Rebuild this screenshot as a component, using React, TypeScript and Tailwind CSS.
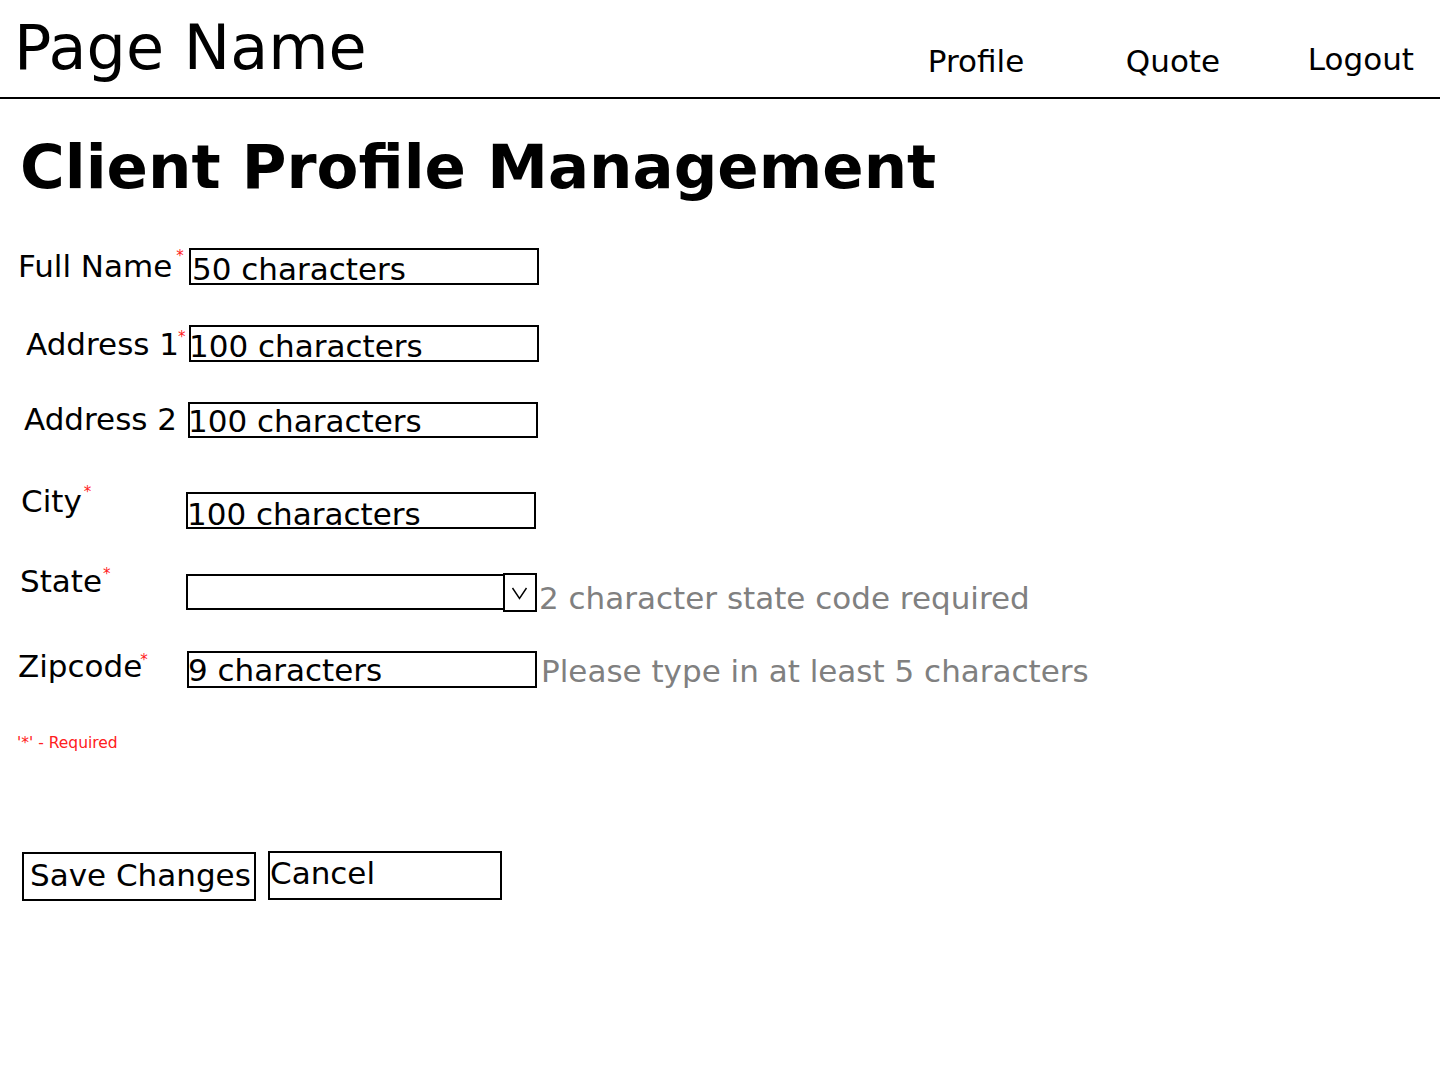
import React from "react";

type FieldRow = {
  label: string;
  required?: boolean;
  value?: string;
  kind?: "text" | "select";
  hint?: string;
  rowH: string;
  padL: string;
  labelW: string;
  labelMt: string;
  starCls: string;
  boxMt: string;
  boxW: string;
  boxH: string;
  textCls: string;
  hintCls?: string;
};

const rows: FieldRow[] = [
  {
    label: "Full Name",
    required: true,
    value: "50 characters",
    rowH: "h-[77px]",
    padL: "pl-[18px]",
    labelW: "w-[171px]",
    labelMt: "mt-0",
    starCls: "mt-[1px] ml-[4px]",
    boxMt: "mt-0",
    boxW: "w-[350px]",
    boxH: "h-[37px]",
    textCls: "pl-[1px] mt-[1px]",
  },
  {
    label: "Address 1",
    required: true,
    value: "100 characters",
    rowH: "h-[76px]",
    padL: "pl-[26px]",
    labelW: "w-[163px]",
    labelMt: "mt-[1px]",
    starCls: "mt-[4px] -ml-[1px]",
    boxMt: "mt-0",
    boxW: "w-[350px]",
    boxH: "h-[37px]",
    textCls: "-ml-[2px] mt-[1px]",
  },
  {
    label: "Address 2",
    value: "100 characters",
    rowH: "h-[82px]",
    padL: "pl-[24px]",
    labelW: "w-[164px]",
    labelMt: "mt-0",
    starCls: "",
    boxMt: "mt-[1px]",
    boxW: "w-[350px]",
    boxH: "h-[36px]",
    textCls: "-ml-[2px] -mt-[1px]",
  },
  {
    label: "City",
    required: true,
    value: "100 characters",
    rowH: "h-[80px]",
    padL: "pl-[21px]",
    labelW: "w-[165px]",
    labelMt: "mt-0",
    starCls: "mt-[2px] ml-[2px]",
    boxMt: "mt-[9px]",
    boxW: "w-[350px]",
    boxH: "h-[37px]",
    textCls: "-ml-[1px] mt-[2px]",
  },
  {
    label: "State",
    required: true,
    kind: "select",
    hint: "2 character state code required",
    rowH: "h-[85px]",
    padL: "pl-[20px]",
    labelW: "w-[166px]",
    labelMt: "mt-0",
    starCls: "mt-[4px] ml-[1px]",
    boxMt: "mt-[11px]",
    boxW: "w-[351px]",
    boxH: "h-[36px]",
    textCls: "",
    hintCls: "ml-[2px] mt-[17px]",
  },
  {
    label: "Zipcode",
    required: true,
    value: "9 characters",
    hint: "Please type in at least 5 characters",
    rowH: "h-[86px]",
    padL: "pl-[18px]",
    labelW: "w-[169px]",
    labelMt: "mt-0",
    starCls: "mt-[5px] -ml-[2px]",
    boxMt: "mt-[3px]",
    boxW: "w-[350px]",
    boxH: "h-[37px]",
    textCls: "-ml-[1px] -mt-[1px]",
    hintCls: "ml-[4px] mt-[5px]",
  },
];

function Chevron() {
  return (
    <svg width="17" height="14" viewBox="0 0 17 14" fill="none">
      <polyline points="1.5,2 8.5,12.5 15.5,2" stroke="#000" strokeWidth="1.4" />
    </svg>
  );
}

function Row({ r }: { r: FieldRow }) {
  return (
    <div className={`flex items-start ${r.rowH} ${r.padL}`}>
      <div className={`flex items-start shrink-0 ${r.labelW} ${r.labelMt}`}>
        <span className="leading-[36px]">{r.label}</span>
        {r.required && (
          <span className={`text-[15px] leading-[15px] text-[#ff2020] ${r.starCls}`}>*</span>
        )}
      </div>
      {r.kind === "select" ? (
        <div className={`relative shrink-0 border-2 border-black ${r.boxW} ${r.boxH} ${r.boxMt}`}>
          <div className="absolute right-[-2px] top-[-3px] w-[34px] h-[39px] border-2 border-black flex items-center justify-center pr-[2px] bg-white">
            <Chevron />
          </div>
        </div>
      ) : (
        <div className={`shrink-0 border-2 border-black overflow-visible ${r.boxW} ${r.boxH} ${r.boxMt}`}>
          <div className={`leading-[36px] whitespace-nowrap ${r.textCls}`}>{r.value}</div>
        </div>
      )}
      {r.hint && (
        <div className={`leading-[36px] text-[#808080] whitespace-nowrap ${r.hintCls ?? ""}`}>{r.hint}</div>
      )}
    </div>
  );
}

export default function App() {
  return (
    <div className="min-h-screen bg-white text-black font-['DejaVu_Sans','Verdana',sans-serif] text-[31px]">
      <header className="flex items-start h-[99px] border-b-2 border-black">
        <div className="ml-[14px] mt-[12px] text-[62px] leading-[72px] whitespace-nowrap">Page Name</div>
        <nav className="ml-auto flex items-start pr-[26px]">
          <a className="w-[198px] mt-[43px] leading-[36px]">Profile</a>
          <a className="w-[182px] mt-[43px] leading-[36px]">Quote</a>
          <a className="mt-[41px] leading-[36px]">Logout</a>
        </nav>
      </header>

      <main className="flex flex-col">
        <h1 className="ml-[20px] mt-[32px] text-[61px] leading-[71px] font-bold whitespace-nowrap">
          Client Profile Management
        </h1>

        <form className="mt-[46px] flex flex-col" onSubmit={(e) => e.preventDefault()}>
          {rows.map((r) => (
            <Row key={r.label} r={r} />
          ))}

          <p className="ml-[17px] text-[15.5px] leading-[18px] text-[#ff2020]">'*' - Required</p>

          <div className="mt-[99px] flex items-start">
            <button
              type="button"
              className="ml-[22px] mt-[1px] w-[234px] h-[49px] border-2 border-black pl-[6px] leading-[36px] whitespace-nowrap flex items-start"
            >
              <span className="mt-[3px]">Save Changes</span>
            </button>
            <button
              type="button"
              className="ml-[12px] w-[234px] h-[49px] border-2 border-black pl-0 leading-[36px] flex items-start"
            >
              <span className="mt-[2px]">Cancel</span>
            </button>
          </div>
        </form>
      </main>
    </div>
  );
}
